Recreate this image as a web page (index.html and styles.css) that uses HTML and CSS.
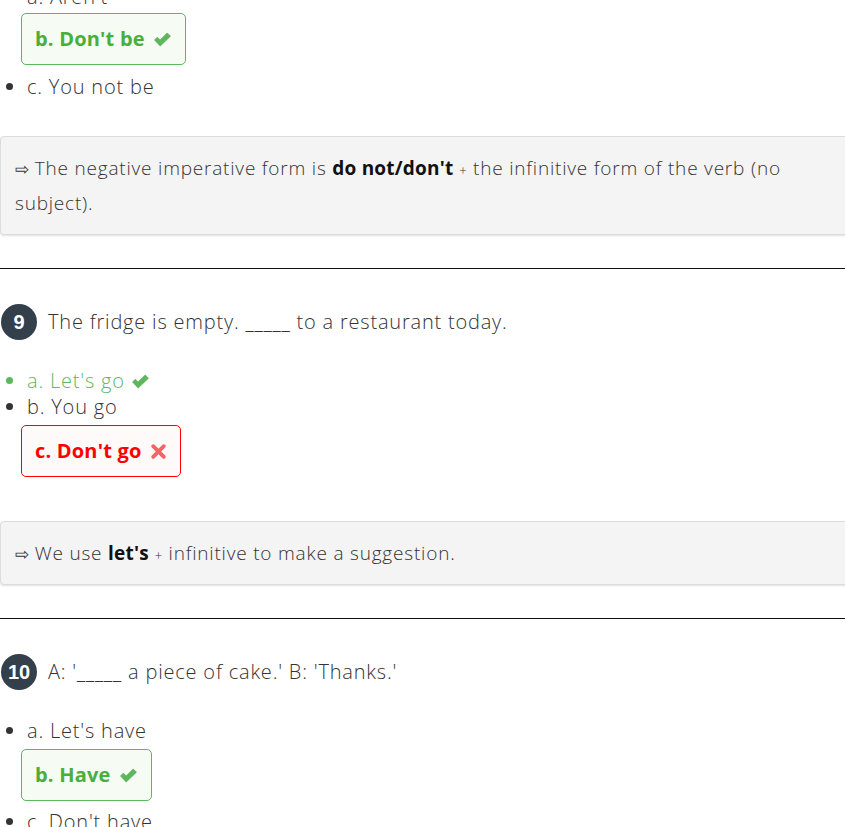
FILE: index.html
```html
<!DOCTYPE html>
<html lang="en">
<head>
<meta charset="utf-8">
<title>Quiz</title>
<link rel="stylesheet" href="styles.css">
</head>
<body>
<div class="page">
  <ul class="options first">
    <li>a. Aren't</li>
    <li class="boxed"><div class="answer correct">b. Don't be <svg class="icon" viewBox="0 0 20 16" width="19" height="15"><path d="M1.5 8.5 L4.5 5.5 L7.5 8.5 L15 1 L18.5 4.5 L7.5 15 Z" fill="#5cb85c" stroke="#4a9e4a" stroke-width="0.6" stroke-linejoin="round"/></svg></div></li>
    <li>c. You not be</li>
  </ul>
  <div class="explain"><span class="arrow">⇨</span> The negative imperative form is <b>do not/don't</b> <span class="plus">+</span> the infinitive form of the verb (no subject).</div>
  <hr class="sep">

  <div class="question"><span class="num">9</span><span class="qtext">The fridge is empty. _____ to a restaurant today.</span></div>
  <ul class="options">
    <li class="right">a. Let's go <svg class="icon" viewBox="0 0 20 16" width="19" height="15"><path d="M1.5 8.5 L4.5 5.5 L7.5 8.5 L15 1 L18.5 4.5 L7.5 15 Z" fill="#5cb85c" stroke="#4a9e4a" stroke-width="0.6" stroke-linejoin="round"/></svg></li>
    <li>b. You go</li>
    <li class="boxed"><div class="answer wrong">c. Don't go <svg class="icon" viewBox="0 0 16 16" width="17" height="17"><path d="M3 3 L13 13 M13 3 L3 13" stroke="#f46464" stroke-width="3.6" stroke-linecap="round"/></svg></div></li>
  </ul>
  <div class="explain"><span class="arrow">⇨</span> We use <b>let's</b> <span class="plus">+</span> infinitive to make a suggestion.</div>
  <hr class="sep">

  <div class="question"><span class="num">10</span><span class="qtext">A: '_____ a piece of cake.' B: 'Thanks.'</span></div>
  <ul class="options">
    <li>a. Let's have</li>
    <li class="boxed"><div class="answer correct">b. Have <svg class="icon" viewBox="0 0 20 16" width="19" height="15"><path d="M1.5 8.5 L4.5 5.5 L7.5 8.5 L15 1 L18.5 4.5 L7.5 15 Z" fill="#5cb85c" stroke="#4a9e4a" stroke-width="0.6" stroke-linejoin="round"/></svg></div></li>
    <li>c. Don't have</li>
  </ul>
</div>
</body>
</html>
```
FILE: styles.css
```css
html {
  overflow: hidden;
}
body {
  margin: 0;
  background: #fff;
  color: #333;
  font-family: "Open Sans", "Lato", sans-serif;
  font-weight: 300;
  letter-spacing: 0.8px;
}
.page {
  width: 860px;
  margin-top: -16px;
}
.options {
  margin: 0 0 36px 0;
  padding-left: 27px;
  font-size: 20px;
  line-height: 26px;
}
.options li {
  color: #333;
}
.options li.right {
  color: #5cb85c;
}
.options li.boxed {
  list-style: none;
}
.answer {
  display: inline-flex;
  align-items: center;
  gap: 8px;
  margin: 3px 0 9px -6px;
  padding: 13px 13px;
  border: 1px solid #5cb85c;
  border-radius: 5px;
  font-weight: 700;
  font-size: 20px;
  line-height: 24px;
  letter-spacing: 0.2px;
}
.options:not(.first) .answer {
  margin-top: 5px;
  margin-bottom: 8px;
}
.answer.correct {
  color: #4cae3a;
  background: #f6fbf4;
}
.answer.wrong {
  color: #ff0000;
  background: #fffafa;
  border-color: #ff0000;
}
.icon {
  display: block;
}
.options li.right .icon {
  display: inline-block;
  vertical-align: -1px;
}
.explain {
  padding: 14px 14px 13px;
  border: 1px solid #dcdcdc;
  border-radius: 4px;
  background: #f4f4f4;
  box-shadow: 0 1px 2px rgba(0, 0, 0, 0.12);
  font-size: 19px;
  line-height: 35px;
  color: #333;
}
.explain b {
  color: #111;
  font-weight: 700;
  letter-spacing: 0.2px;
}
.arrow {
  font-size: 17px;
  line-height: 0;
  font-family: "DejaVu Sans", sans-serif;
  letter-spacing: 0;
}
.plus {
  font-size: 13px;
  line-height: 0;
}
.sep {
  margin: 33px 0 0;
  border: 0;
  border-top: 1px solid #111;
  height: 0;
}
.question {
  display: flex;
  align-items: center;
  gap: 11px;
  margin: 35px 0 28px 1px;
  font-size: 20px;
  line-height: 26px;
}
.num {
  flex: none;
  display: flex;
  align-items: center;
  justify-content: center;
  width: 36px;
  height: 36px;
  border-radius: 50%;
  background: #343f4c;
  color: #fff;
  font-family: "Liberation Sans", Arial, sans-serif;
  font-weight: 700;
  font-size: 20px;
  letter-spacing: 0;
}
.qtext {
  color: #333;
}
```
